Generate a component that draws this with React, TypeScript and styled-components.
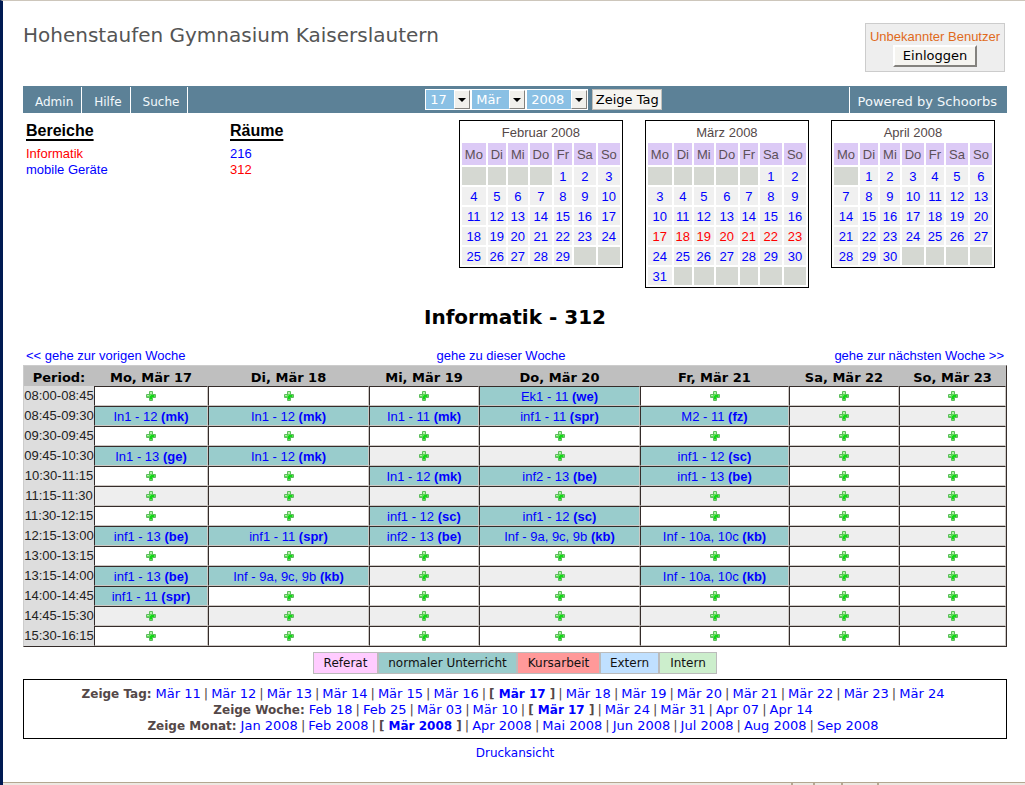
import React, { Fragment } from 'react';
import styled, { createGlobalStyle } from 'styled-components';

const sans = '"Liberation Sans", Arial, sans-serif';
const wide = '"DejaVu Sans", Verdana, sans-serif';

const GlobalStyle = createGlobalStyle`
  *, *::before, *::after { box-sizing: border-box; }
  body { margin: 0; background: #fff; color: #544848; font: 13px/16px ${sans}; }
  a { color: #0000ff; text-decoration: none; }
  a:hover { text-decoration: underline; }
`;

const Page = styled.div`
  display: flex;
  flex-direction: column;
  min-height: 100vh;
  border-left: 3px solid #001a52;
  border-top: 1px solid #cdc6bb;
`;

const Content = styled.main`
  flex: 1;
  padding: 22px 18px 20px 20px;
`;

const Header = styled.header`
  display: flex;
  justify-content: space-between;
  align-items: flex-start;
  padding-right: 2px;
  margin-bottom: 14px;
`;

const SiteTitle = styled.div`
  font: 20px/24px ${wide};
  color: #555;
`;

const LoginBox = styled.div`
  display: flex;
  flex-direction: column;
  align-items: center;
  width: 140px;
  height: 49px;
  padding-top: 5px;
  background: #eee;
  border: 1px solid #ccc;
  color: #e06a1c;
`;

const LoginButton = styled.button`
  width: 84px;
  height: 22px;
  padding: 0;
  font: 13px/16px ${wide};
  color: #000;
  background: #f5f4f0;
  border: 2px solid;
  border-color: #fff #84827e #84827e #fff;
`;

const NavBar = styled.nav`
  display: grid;
  grid-template-columns: 7fr auto 6fr;
  height: 27px;
  background: #5c8197;
  font: 12px/16px ${wide};
`;

const NavGroup = styled.div<{ $end?: boolean }>`
  display: flex;
  justify-content: ${p => (p.$end ? 'flex-end' : 'flex-start')};
  padding-top: 1px;
`;

const NavLink = styled.a`
  padding: 7px 8px 0 12px;
  border-right: 1px solid #fff;
  color: #f2f8fb;
`;

const PoweredLink = styled.a`
  padding: 7px 10px 0 8px;
  border-left: 1px solid #fff;
  color: #f2f8fb;
  font-size: 13px;
`;

const DateForm = styled.form`
  display: flex;
  align-items: center;
  margin: 0;
`;

const SelectBox = styled.span<{ $width: number }>`
  display: inline-grid;
  width: ${p => p.$width}px;
  height: 21px;
  & > * { grid-area: 1 / 1; }
`;

const Select = styled.select`
  appearance: none;
  width: 100%;
  height: 100%;
  padding: 0 0 0 4px;
  border: 1px solid #fff;
  border-radius: 0;
  background: #8ac0e4;
  color: #fff;
  font: 13px/16px ${wide};
`;

const Arrow = styled.span`
  justify-self: end;
  align-self: center;
  display: flex;
  align-items: center;
  justify-content: center;
  width: 16px;
  height: 19px;
  margin-right: 1px;
  background: #f1f0ec;
  border: 1px solid;
  border-color: #fff #84827e #84827e #fff;
  pointer-events: none;
`;

const ShowButton = styled.button`
  width: 70px;
  height: 21px;
  margin-left: 4px;
  padding: 0;
  font: 13px/16px ${wide};
  color: #000;
  background: #f5f4f0;
  border: 1px solid #c3c0ba;
`;

const Overview = styled.section`
  display: grid;
  grid-template-columns: 204px 1fr auto;
  padding: 7px 12px 0 3px;
`;

const ListTitle = styled.h2`
  margin: 0 0 5px;
  font: bold 16px/21px ${sans};
  color: #000;
  text-decoration: underline 2px;
  text-underline-offset: 3px;
  text-decoration-skip-ink: none;
`;

const List = styled.ul`
  margin: 0;
  padding: 0;
  list-style: none;
`;

const MarkLink = styled.a<{ $active?: boolean }>`
  color: ${p => (p.$active ? '#ff0000' : '#0000ff')};
`;

const Calendars = styled.div`
  display: flex;
  align-items: flex-start;
  gap: 22px;
`;

const MonthTable = styled.table`
  table-layout: fixed;
  width: 164px;
  border: 1px solid #000;
  border-spacing: 2px;
  text-align: center;
  th, td { height: 18px; padding: 2px 0 0; font-weight: normal; }
`;

const Weekday = styled.th`
  && { height: 22px; }
  background: #dccaf6;
  color: #5c5058;
`;

const Day = styled.td<{ $empty: boolean }>`
  background: ${p => (p.$empty ? '#d5d8d2' : '#f0f0f0')};
`;

const RoomTitle = styled.h1`
  margin: 17px 0 18px;
  font: bold 20px/24px ${wide};
  color: #000;
  text-align: center;
`;

const WeekNav = styled.div`
  display: grid;
  grid-template-columns: 12fr 10fr 13fr;
  padding: 1px 3px;
  a:nth-child(2) { text-align: center; }
  a:nth-child(3) { text-align: right; }
`;

const Plan = styled.table`
  table-layout: fixed;
  width: 100%;
  border: 1px solid;
  border-color: #ccc #342c2a #342c2a #ccc;
  border-spacing: 0;
  text-align: center;
`;

const DayHead = styled.th`
  height: 20px;
  padding: 3px 0 0;
  background: #bfbfbf;
  color: #000;
  font: bold 13px/16px ${wide};
`;

const Time = styled.th`
  height: 20px;
  padding: 0;
  background: #ddd;
  color: #222;
  font-weight: normal;
  line-height: 16px;
  white-space: nowrap;
`;

const Slot = styled.td<{ $taken: boolean; $shade: boolean }>`
  height: 20px;
  padding: ${p => (p.$taken ? '2px 0 0' : '0')};
  border: 1px solid;
  border-color: #342c2a #ccc8c4 #ccc8c4 #342c2a;
  background: ${p => (p.$taken ? '#99cccc' : p.$shade ? '#eee' : '#fff')};
  white-space: nowrap;
`;

const AddLink = styled.a`
  display: flex;
  justify-content: center;
`;

const Legend = styled.ul`
  display: flex;
  justify-content: center;
  margin: 5px 0;
  padding: 0;
  list-style: none;
  font: 12px/20px ${wide};
  color: #111;
`;

const LegendItem = styled.li<{ $color: string; $width: number }>`
  width: ${p => p.$width}px;
  border: 1px solid #bbb;
  background: ${p => p.$color};
  text-align: center;
  white-space: nowrap;
`;

const JumpBox = styled.nav`
  padding: 6px 4px 4px 0;
  border: 1px solid #000;
  font: 13px/16px ${wide};
`;

const JumpRow = styled.div`
  display: flex;
  justify-content: center;
  b { font-size: 12px; }
`;

const JumpLabel = styled.b`
  margin-right: 4px;
`;

const Pipe = styled.span`
  margin: 0 3px;
`;

const PrintRow = styled.div`
  margin-top: 6px;
  text-align: center;
  font: 12px/16px ${wide};
`;

const StatusBar = styled.footer`
  display: flex;
  height: 3px;
  border-top: 1px solid #b3a791;
  background: #ede8e2;
`;

const StatusCell = styled.span<{ $width?: number }>`
  flex: ${p => (p.$width ? `0 0 ${p.$width}px` : '1')};
  border-right: 2px solid #b3a791;
  &:last-child { border-right: 0; }
`;

const ArrowIcon = () => (
  <svg width="8" height="4" viewBox="0 0 8 4" aria-hidden="true"><path d="M0 0h8L4 4z" fill="#000" /></svg>
);

const PlusIcon = () => (
  <svg width="10" height="10" viewBox="0 0 10 10" aria-hidden="true">
    <rect x="3" y="0" width="4" height="10" rx="1" fill="#5cbc5c" />
    <rect x="0" y="3" width="10" height="4" rx="1" fill="#5cbc5c" />
    <path d="M4 1h2v3h3v2H6v3H4V6H1V4h3z" fill="#58e052" />
    <path d="M4 1h2v2H4zM1 4h2v1H1z" fill="#b4efac" />
    <path d="M5 4h3v2H6v2H4V5h1z" fill="#10d814" />
  </svg>
);

const PickList = ({ label, width, value }: { label: string; width: number; value: string }) => (
  <SelectBox $width={width}>
    <Select aria-label={label} defaultValue={value}><option>{value}</option></Select>
    <Arrow><ArrowIcon /></Arrow>
  </SelectBox>
);

const weekdays: [string, number][] = [['Mo', 24], ['Di', 18], ['Mi', 20], ['Do', 22], ['Fr', 18], ['Sa', 22], ['So', 22]];

type MonthProps = { name: string; offset: number; days: number; markFrom?: number };

const Month = ({ name, offset, days, markFrom }: MonthProps) => {
  const weeks = Math.ceil((offset + days) / 7);
  return (
    <MonthTable>
      <colgroup>{weekdays.map(([d, w]) => <col key={d} width={w} />)}</colgroup>
      <thead>
        <tr><th colSpan={7}>{name}</th></tr>
        <tr>{weekdays.map(([d]) => <Weekday key={d}>{d}</Weekday>)}</tr>
      </thead>
      <tbody>
        {Array.from({ length: weeks }, (_, w) => (
          <tr key={w}>
            {weekdays.map(([d], i) => {
              const n = w * 7 + i - offset + 1;
              const empty = n < 1 || n > days;
              const active = markFrom !== undefined && n >= markFrom && n < markFrom + 7;
              return <Day key={d} $empty={empty}>{!empty && <MarkLink href="#" $active={active}>{n}</MarkLink>}</Day>;
            })}
          </tr>
        ))}
      </tbody>
    </MonthTable>
  );
};

const columns: [string, number][] = [
  ['Period:', 70], ['Mo, Mär 17', 114], ['Di, Mär 18', 161], ['Mi, Mär 19', 110],
  ['Do, Mär 20', 161], ['Fr, Mär 21', 149], ['Sa, Mär 22', 110], ['So, Mär 23', 107],
];

// Each row: period, then the entries Monday to Friday as "lesson|teacher".
const periods: [string, string[]][] = [
  ['08:00-08:45', ['', '', '', 'Ek1 - 11|we', '']],
  ['08:45-09:30', ['In1 - 12|mk', 'In1 - 12|mk', 'In1 - 11|mk', 'inf1 - 11|spr', 'M2 - 11|fz']],
  ['09:30-09:45', []],
  ['09:45-10:30', ['In1 - 13|ge', 'In1 - 12|mk', '', '', 'inf1 - 12|sc']],
  ['10:30-11:15', ['', '', 'In1 - 12|mk', 'inf2 - 13|be', 'inf1 - 13|be']],
  ['11:15-11:30', []],
  ['11:30-12:15', ['', '', 'inf1 - 12|sc', 'inf1 - 12|sc', '']],
  ['12:15-13:00', ['inf1 - 13|be', 'inf1 - 11|spr', 'inf2 - 13|be', 'Inf - 9a, 9c, 9b|kb', 'Inf - 10a, 10c|kb']],
  ['13:00-13:15', []],
  ['13:15-14:00', ['inf1 - 13|be', 'Inf - 9a, 9c, 9b|kb', '', '', 'Inf - 10a, 10c|kb']],
  ['14:00-14:45', ['inf1 - 11|spr']],
  ['14:45-15:30', []],
  ['15:30-16:15', []],
];

const legend: [string, string, number][] = [
  ['Referat', '#ffccff', 65], ['normaler Unterricht', '#99cccc', 139], ['Kursarbeit', '#ff9999', 83],
  ['Extern', '#c0e0ff', 59], ['Intern', '#cceecc', 58],
];

const jumps: { label: string; items: string[]; current: string }[] = [
  {
    label: 'Zeige Tag:', current: 'Mär 17',
    items: Array.from({ length: 14 }, (_, i) => `Mär ${i + 11}`),
  },
  {
    label: 'Zeige Woche:', current: 'Mär 17',
    items: ['Feb 18', 'Feb 25', 'Mär 03', 'Mär 10', 'Mär 17', 'Mär 24', 'Mär 31', 'Apr 07', 'Apr 14'],
  },
  {
    label: 'Zeige Monat:', current: 'Mär 2008',
    items: ['Jan', 'Feb', 'Mär', 'Apr', 'Mai', 'Jun', 'Jul', 'Aug', 'Sep'].map(m => `${m} 2008`),
  },
];

export default function App() {
  return (
    <Page>
      <GlobalStyle />
      <Content>
        <Header>
          <SiteTitle>Hohenstaufen Gymnasium Kaiserslautern</SiteTitle>
          <LoginBox>
            <span>Unbekannter Benutzer</span>
            <LoginButton type="button">Einloggen</LoginButton>
          </LoginBox>
        </Header>

        <NavBar>
          <NavGroup>
            <NavLink href="#">Admin</NavLink>
            <NavLink href="#">Hilfe</NavLink>
            <NavLink href="#">Suche</NavLink>
          </NavGroup>
          <DateForm onSubmit={e => e.preventDefault()}>
            <PickList label="Tag" width={46} value="17" />
            <PickList label="Monat" width={55} value="Mär" />
            <PickList label="Jahr" width={62} value="2008" />
            <ShowButton type="submit">Zeige Tag</ShowButton>
          </DateForm>
          <NavGroup $end>
            <PoweredLink href="#">Powered by Schoorbs</PoweredLink>
          </NavGroup>
        </NavBar>

        <Overview>
          <div>
            <ListTitle>Bereiche</ListTitle>
            <List>
              <li><MarkLink href="#" $active>Informatik</MarkLink></li>
              <li><MarkLink href="#">mobile Geräte</MarkLink></li>
            </List>
          </div>
          <div>
            <ListTitle>Räume</ListTitle>
            <List>
              <li><MarkLink href="#">216</MarkLink></li>
              <li><MarkLink href="#" $active>312</MarkLink></li>
            </List>
          </div>
          <Calendars>
            <Month name="Februar 2008" offset={4} days={29} />
            <Month name="März 2008" offset={5} days={31} markFrom={17} />
            <Month name="April 2008" offset={1} days={30} />
          </Calendars>
        </Overview>

        <RoomTitle>Informatik - 312</RoomTitle>

        <WeekNav>
          <a href="#">&lt;&lt; gehe zur vorigen Woche</a>
          <a href="#">gehe zu dieser Woche</a>
          <a href="#">gehe zur nächsten Woche &gt;&gt;</a>
        </WeekNav>

        <Plan>
          <colgroup>{columns.map(([c, w]) => <col key={c} width={w} />)}</colgroup>
          <thead>
            <tr>{columns.map(([c]) => <DayHead key={c} scope="col">{c}</DayHead>)}</tr>
          </thead>
          <tbody>
            {periods.map(([time, entries], row) => (
              <tr key={time}>
                <Time scope="row">{time}</Time>
                {columns.slice(1).map(([c], i) => {
                  const [lesson, teacher] = (entries[i] || '').split('|');
                  return (
                    <Slot key={c} $taken={!!lesson} $shade={row % 2 === 1}>
                      {lesson
                        ? <a href="#">{lesson} <b>({teacher})</b></a>
                        : <AddLink href="#" aria-label={`${c}, ${time}`}><PlusIcon /></AddLink>}
                    </Slot>
                  );
                })}
              </tr>
            ))}
          </tbody>
        </Plan>

        <Legend>
          {legend.map(([name, color, width]) => <LegendItem key={name} $color={color} $width={width}>{name}</LegendItem>)}
        </Legend>

        <JumpBox>
          {jumps.map(({ label, items, current }) => (
            <JumpRow key={label}>
              <JumpLabel>{label}</JumpLabel>
              {items.map((item, i) => (
                <Fragment key={item}>
                  {i > 0 && <Pipe>|</Pipe>}
                  {item === current ? <b>[ <a href="#">{item}</a> ]</b> : <a href="#">{item}</a>}
                </Fragment>
              ))}
            </JumpRow>
          ))}
        </JumpBox>

        <PrintRow><a href="#">Druckansicht</a></PrintRow>
      </Content>
      <StatusBar>
        <StatusCell />
        <StatusCell $width={22} />
        <StatusCell $width={28} />
        <StatusCell $width={36} />
        <StatusCell $width={146} />
      </StatusBar>
    </Page>
  );
}
